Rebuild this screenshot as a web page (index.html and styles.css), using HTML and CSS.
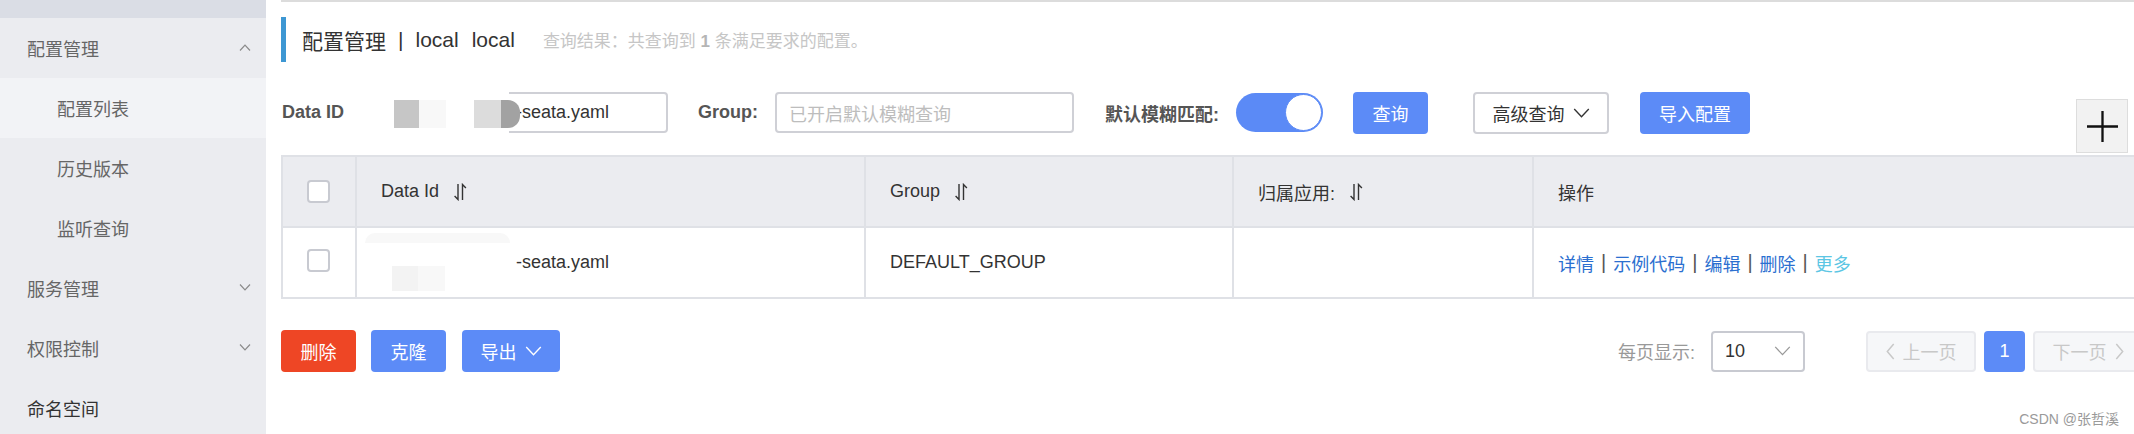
FILE: index.html
```html
<!DOCTYPE html>
<html lang="zh-CN">
<head>
<meta charset="utf-8">
<title>配置管理</title>
<link rel="stylesheet" href="styles.css">
</head>
<body>
<div class="app">
  <aside class="sidebar">
    <div class="side-top"></div>
    <div class="menu-item">配置管理
      <svg class="chev" viewBox="0 0 12 7" width="12" height="7"><path d="M1 6.5L6 1.2L11 6.5" /></svg>
    </div>
    <div class="menu-sub active">配置列表</div>
    <div class="menu-sub">历史版本</div>
    <div class="menu-sub">监听查询</div>
    <div class="menu-item">服务管理
      <svg class="chev" viewBox="0 0 12 7" width="12" height="7"><path d="M1 0.5L6 5.8L11 0.5" /></svg>
    </div>
    <div class="menu-item">权限控制
      <svg class="chev" viewBox="0 0 12 7" width="12" height="7"><path d="M1 0.5L6 5.8L11 0.5" /></svg>
    </div>
    <div class="menu-item dark">命名空间</div>
  </aside>

  <main class="main">
    <div class="content">
      <div class="title">
        <span class="title-main">配置管理</span>
        <span class="title-sep">|</span>
        <span class="title-ns">local</span>
        <span class="title-ns2">local</span>
        <span class="title-result">查询结果：共查询到 <b>1</b> 条满足要求的配置。</span>
      </div>

      <div class="search">
        <label class="lbl lbl-dataid">Data ID</label>
        <div class="field field-dataid">
          <div class="cover">
            <span class="mz mz1"></span><span class="mz mz2"></span><span class="mz-gap"></span><span class="mz mz3"></span><span class="mz mz4"></span>
          </div>
          <span class="field-value">-seata.yaml</span>
        </div>
        <label class="lbl lbl-group">Group:</label>
        <div class="field field-group"><span class="placeholder">已开启默认模糊查询</span></div>
        <label class="lbl lbl-fuzzy">默认模糊匹配:</label>
        <div class="switch"><span class="knob"></span></div>
        <button class="btn btn-primary btn-query">查询</button>
        <button class="btn btn-normal btn-adv">高级查询
          <svg viewBox="0 0 18 11" width="17" height="10"><path d="M1 1L9 9.5L17 1" /></svg>
        </button>
        <button class="btn btn-primary btn-import">导入配置</button>
        <div class="plus">
          <svg viewBox="0 0 32 32" width="31" height="31"><path d="M16 0V32M0 16H32" /></svg>
        </div>
      </div>

      <div class="table">
        <div class="row head">
          <div class="cell c-check"><span class="checkbox"></span></div>
          <div class="cell">Data Id
            <svg class="sort" viewBox="0 0 16 18" width="16" height="18"><path d="M6 1V16.5L2.6 13M10.5 17V1.5L13.9 5" /></svg>
          </div>
          <div class="cell">Group
            <svg class="sort" viewBox="0 0 16 18" width="16" height="18"><path d="M6 1V16.5L2.6 13M10.5 17V1.5L13.9 5" /></svg>
          </div>
          <div class="cell">归属应用:
            <svg class="sort" viewBox="0 0 16 18" width="16" height="18"><path d="M6 1V16.5L2.6 13M10.5 17V1.5L13.9 5" /></svg>
          </div>
          <div class="cell c-last">操作</div>
        </div>
        <div class="row body">
          <div class="cell c-check"><span class="checkbox"></span></div>
          <div class="cell">
            <span class="redact">
              <span class="rz-arc"></span>
              <span class="rz rz1"></span><span class="rz rz2"></span>
            </span>-seata.yaml
          </div>
          <div class="cell">DEFAULT_GROUP</div>
          <div class="cell"></div>
          <div class="cell c-last actions">
            <a class="link">详情</a><span class="sep">|</span><a class="link">示例代码</a><span class="sep">|</span><a class="link">编辑</a><span class="sep">|</span><a class="link">删除</a><span class="sep">|</span><a class="link more">更多</a>
          </div>
        </div>
      </div>

      <div class="footer">
        <div class="bulk">
          <button class="btn btn-danger btn-del">删除</button>
          <button class="btn btn-primary btn-clone">克隆</button>
          <button class="btn btn-primary btn-export">导出
            <svg viewBox="0 0 18 11" width="17" height="10"><path d="M1 1L9 9.5L17 1" /></svg>
          </button>
        </div>
        <div class="pager">
          <span class="page-label">每页显示:</span>
          <div class="select"><span>10</span>
            <svg viewBox="0 0 18 11" width="17" height="10"><path d="M1 1L9 9.5L17 1" /></svg>
          </div>
          <button class="page-btn page-prev">
            <svg viewBox="0 0 8 16" width="9" height="17"><path d="M7 1L1 8L7 15" /></svg>上一页</button>
          <button class="page-num">1</button>
          <button class="page-btn page-next">下一页
            <svg viewBox="0 0 8 16" width="9" height="17"><path d="M1 1L7 8L1 15" /></svg></button>
        </div>
      </div>
    </div>
  </main>
</div>
<div class="watermark">CSDN @张哲溪</div>
</body>
</html>
```

FILE: styles.css
```css
* { box-sizing: border-box; }
html, body {
  margin: 0;
  padding: 0;
  width: 2134px;
  height: 434px;
  overflow: hidden;
  background: #fff;
  font-family: "Liberation Sans", "Noto Sans CJK SC", sans-serif;
  color: #333;
}
.app {
  display: flex;
  width: 2134px;
  height: 434px;
}

/* sidebar */
.sidebar {
  width: 266px;
  flex: none;
  background: #ebecf0;
  height: 434px;
}
.side-top {
  height: 18px;
  background: #dadde5;
}
.menu-item, .menu-sub {
  height: 60px;
  display: flex;
  align-items: center;
  font-size: 18px;
  color: #666;
  position: relative;
}
.menu-item { padding-left: 27px; }
.menu-sub { padding-left: 57px; }
.menu-sub.active { background: #f2f3f6; }
.menu-item.dark { color: #333; }
.chev {
  position: absolute;
  left: 239px;
  top: 26px;
}
.chev path {
  fill: none;
  stroke: #8a8a8a;
  stroke-width: 1.2;
}

/* main */
.main {
  flex: 1;
  padding-left: 15px;
  overflow: hidden;
}
.content {
  width: 1880px;
  border-top: 2px solid #dcdcdc;
}

.title {
  margin-top: 15px;
  height: 45px;
  border-left: 5px solid #3d97d3;
  display: flex;
  align-items: center;
  padding-left: 16px;
  white-space: nowrap;
}
.title-main { font-size: 21px; color: #333; }
.title-sep { font-size: 21px; margin-left: 12px; color: #333; }
.title-ns { font-size: 21px; margin-left: 12px; color: #333; }
.title-ns2 { font-size: 21px; margin-left: 13px; color: #333; }
.title-result {
  font-size: 17px;
  color: #c6c6c6;
  margin-left: 28px;
}
.title-result b { color: #b5b5b5; }

/* search */
.search {
  margin-top: 30px;
  height: 41px;
  display: flex;
  align-items: center;
  padding-left: 1px;
}
.lbl {
  font-size: 18px;
  font-weight: bold;
  color: #555;
  flex: none;
  white-space: nowrap;
}
.lbl-dataid { width: 85px; }
.lbl-group { width: 77px; margin-left: 30px; }
.lbl-fuzzy { width: 131px; margin-left: 31px; }
.field {
  height: 41px;
  border: 2px solid #cfd0d6;
  border-radius: 4px;
  display: flex;
  align-items: center;
  font-size: 18px;
  flex: none;
  position: relative;
}
.field-dataid { width: 301px; padding-left: 147px; color: #333; }
.field-group { width: 299px; padding-left: 12px; }
.placeholder { color: #bdbdbd; }
.cover {
  position: absolute;
  left: -22px;
  top: -4px;
  width: 162px;
  height: 47px;
  background: #fff;
  display: flex;
  align-items: center;
  padding-left: 47px;
}
.mz { display: block; height: 28px; flex: none; }
.mz1 { width: 25px; background: #c6c6c6; }
.mz2 { width: 27px; background: #f8f8f8; }
.mz-gap { display: block; width: 28px; flex: none; }
.mz3 { width: 27px; background: #dcdcdc; }
.mz4 { width: 19px; background: #a2a2a2; border-radius: 0 12px 12px 0; }

.switch {
  width: 87px;
  height: 39px;
  border-radius: 20px;
  background: #5b8af6;
  flex: none;
  display: flex;
  align-items: center;
  justify-content: flex-end;
  padding-right: 1px;
}
.knob {
  width: 37px;
  height: 37px;
  border-radius: 50%;
  background: #fff;
  border: 1px solid #5b8af6;
}

.btn {
  font-family: inherit;
  font-size: 18px;
  height: 42px;
  border-radius: 4px;
  border: none;
  padding: 0;
  flex: none;
  display: flex;
  align-items: center;
  justify-content: center;
  gap: 8px;
}
.btn svg path { fill: none; stroke-width: 1.5; }
.btn-primary { background: #5c8bf7; color: #fff; }
.btn-primary svg path { stroke: #fff; }
.btn-danger { background: #ee4625; color: #fff; }
.btn-normal { background: #fff; color: #333; border: 2px solid #cfd0d6; }
.btn-normal svg path { stroke: #333; }
.btn-query { width: 75px; margin-left: 30px; }
.btn-adv { width: 136px; margin-left: 45px; }
.btn-import { width: 110px; margin-left: 31px; }
.plus {
  margin-left: auto;
  margin-right: 33px;
  align-self: flex-start;
  margin-top: 7px;
  width: 52px;
  height: 54px;
  background: #f2f2f2;
  border: 1px solid #dddddd;
  display: flex;
  align-items: center;
  justify-content: center;
  flex: none;
}
.plus path { stroke: #111; stroke-width: 2.4; fill: none; }

/* table */
.table {
  margin-top: 22px;
  border-top: 2px solid #dfe1e6;
  border-left: 2px solid #dfe1e6;
}
.row {
  display: grid;
  grid-template-columns: 74px 509px 368px 300px 1fr;
  border-bottom: 2px solid #dfe1e6;
  height: 71px;
}
.row.head { background: #ebecf0; }
.cell {
  border-right: 2px solid #dfe1e6;
  display: flex;
  align-items: center;
  padding-left: 24px;
  font-size: 18px;
  color: #333;
  white-space: nowrap;
}
.cell.c-last { border-right: none; }
.c-check { padding-left: 24px; }
.checkbox {
  width: 23px;
  height: 23px;
  border: 2px solid #c8cad1;
  border-radius: 4px;
  background: #fff;
}
.row.body .checkbox { margin-top: -4px; }
.sort { margin-left: 13px; }
.sort path { fill: none; stroke: #333; stroke-width: 1.4; }

.redact {
  display: block;
  position: relative;
  width: 135px;
  height: 60px;
  flex: none;
  margin-left: -24px;
  margin-right: 24px;
}
.rz {
  position: absolute;
  top: 33px;
  height: 25px;
}
.rz1 { left: 35px; width: 26px; background: #f3f3f3; }
.rz2 { left: 61px; width: 27px; background: #f8f8f8; }
.rz-arc {
  position: absolute;
  left: 8px;
  top: 0;
  width: 145px;
  height: 10px;
  border-radius: 12px 12px 0 0;
  background: #f8f8f8;
}

.actions { gap: 0; }
.link { color: #2b6fd0; text-decoration: none; }
.link.more { color: #5cc6e4; }
.sep { color: #555; margin: 0 7px; font-size: 20px; }

/* footer */
.footer {
  margin-top: 31px;
  height: 42px;
  display: flex;
  align-items: center;
  padding-right: 18px;
}
.bulk { display: flex; gap: 15px; }
.btn-del { width: 75px; }
.btn-clone { width: 75px; }
.btn-export { width: 98px; margin-left: 1px; }
.pager {
  margin-left: auto;
  display: flex;
  align-items: center;
}
.page-label {
  font-size: 18px;
  color: #999;
  margin-right: 16px;
}
.select {
  width: 94px;
  height: 41px;
  border: 2px solid #c8cad1;
  border-radius: 4px;
  display: flex;
  align-items: center;
  justify-content: space-between;
  padding: 0 12px 0 12px;
  font-size: 18px;
  color: #333;
}
.select path { fill: none; stroke: #999; stroke-width: 1.4; }
.page-btn {
  font-family: inherit;
  width: 110px;
  height: 41px;
  background: #f6f7f9;
  border: 2px solid #e9eaee;
  border-radius: 4px;
  color: #c8c8c8;
  font-size: 18px;
  display: flex;
  align-items: center;
  justify-content: center;
  gap: 8px;
  padding: 0;
}
.page-btn path { fill: none; stroke: #c8c8c8; stroke-width: 1.4; }
.page-prev { margin-left: 61px; }
.page-num {
  font-family: inherit;
  width: 41px;
  height: 41px;
  margin: 0 8px;
  border: none;
  border-radius: 4px;
  background: #5c8bf7;
  color: #fff;
  font-size: 18px;
  padding: 0;
}

.watermark {
  position: absolute;
  right: 15px;
  top: 408px;
  font-size: 14px;
  color: #9a9a9a;
  white-space: nowrap;
}
```
